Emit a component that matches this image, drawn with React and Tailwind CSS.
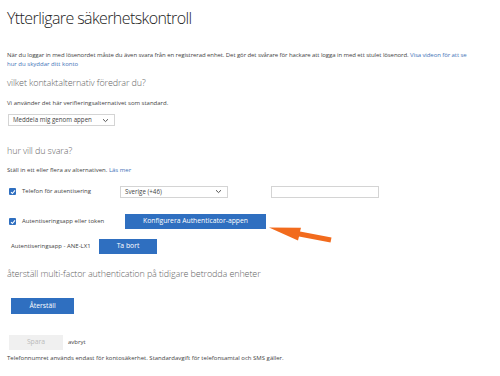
import React from "react";

const Chevron = () => (
  <svg width="7" height="5" viewBox="0 0 7 5" className="shrink-0">
    <path d="M1 1.2 L3.5 3.6 L6 1.2" fill="none" stroke="#555" strokeWidth="1" />
  </svg>
);

const Check = () => (
  <span className="flex h-[7px] w-[7px] items-center justify-center rounded-[1px] bg-[#2f6fc0]">
    <svg width="6" height="6" viewBox="0 0 6 6">
      <path d="M1 3.1 L2.4 4.5 L5 1.4" fill="none" stroke="#fff" strokeWidth="1.1" />
    </svg>
  </span>
);

const FakeSelect = ({ label, className }) => (
  <div
    className={`flex h-[12px] items-center justify-between border border-[#d4d4d4] bg-white pl-[4px] pr-[5px] text-[6.2px] text-[#444] ${className}`}
  >
    <span>{label}</span>
    <Chevron />
  </div>
);

export default function App() {
  return (
    <div
      className="relative h-[376px] w-[500px] overflow-hidden bg-white pl-[7px] text-[#333]"
      style={{ fontFamily: '"Open Sans", "Noto Sans", sans-serif' }}
    >
      {/* Title */}
      <h1 className="pt-[7px] text-[16px] font-light leading-[22px] tracking-[-0.6px] text-[#222]">
        Ytterligare säkerhetskontroll
      </h1>

      <p className="mt-[22px] text-[6px] leading-[9px] text-[#444]">
        <span className="whitespace-nowrap tracking-[-0.08px]">
          När du loggar in med lösenordet måste du även svara från en registrerad enhet. Det gör det svårare för hackare att logga in med ett stulet lösenord.{" "}
          <span className="text-[#3f73b8]">Visa videon för att se</span>
        </span>
        <br />
        <span className="text-[#3f73b8]">hur du skyddar ditt konto</span>
      </p>

      {/* Preferred option */}
      <h2 className="mt-[7px] text-[9px] font-light leading-[14px] tracking-[-0.12px] text-[#666]">
        vilket kontaktalternativ föredrar du?
      </h2>
      <p className="mt-[9px] text-[6px] leading-[9px] text-[#444]">
        Vi använder det här verifieringsalternativet som standard.
      </p>
      <FakeSelect label="Meddela mig genom appen" className="ml-[1px] mt-[6px] w-[107px]" />

      {/* How to answer */}
      <h2 className="mt-[18px] text-[9px] font-light leading-[14px] tracking-[-0.12px] text-[#666]">
        hur vill du svara?
      </h2>
      <p className="mt-[8px] text-[6px] leading-[9px] text-[#444]">
        Ställ in ett eller flera av alternativen. <span className="text-[#3f73b8]">Läs mer</span>
      </p>

      <div className="mt-[10px] flex h-[13px] items-center">
        <div className="ml-[2px] flex w-[111px] items-center gap-[6px] text-[6px] text-[#444]">
          <Check />
          <span>Telefon för autentisering</span>
        </div>
        <FakeSelect label="Sverige (+46)" className="w-[108px]" />
        <div className="ml-[43px] h-[12px] w-[108px] border border-[#d4d4d4] bg-white" />
      </div>

      <div className="mt-[16px] flex h-[15px] items-center">
        <div className="ml-[2px] flex w-[116px] items-center gap-[6px] text-[6px] text-[#444]">
          <Check />
          <span>Autentiseringsapp eller token</span>
        </div>
        <button className="flex h-[15px] w-[141px] items-center justify-center bg-[#2f6fc0] text-[6.8px] text-white">
          Konfigurera Authenticator-appen
        </button>
      </div>

      <div className="mt-[10px] flex h-[15px] items-center">
        <span className="ml-[4px] w-[88px] text-[6px] text-[#444]">Autentiseringsapp - ANE-LX1</span>
        <button className="flex h-[15px] w-[58px] items-center justify-center bg-[#2f6fc0] text-[6.8px] text-white">
          Ta bort
        </button>
      </div>

      {/* Reset */}
      <h2 className="mt-[13px] text-[9px] font-light leading-[14px] tracking-[-0.12px] text-[#666]">
        återställ multi-factor authentication på tidigare betrodda enheter
      </h2>
      <button className="ml-[4px] mt-[17px] flex h-[16px] w-[63px] items-center justify-center bg-[#2f6fc0] text-[6.8px] text-white">
        Återställ
      </button>

      <div className="mt-[21px] flex h-[15px] items-center gap-[5px]">
        <button className="ml-[2px] flex h-[15px] w-[54px] items-center justify-center bg-[#f0f0f0] text-[6.8px] text-[#bbb]">
          Spara
        </button>
        <span className="text-[6px] text-[#444]">avbryt</span>
      </div>
      <p className="mt-[4px] text-[6px] leading-[9px] text-[#444]">
        Telefonnumret används endast för kontosäkerhet. Standardavgift för telefonsamtal och SMS gäller.
      </p>

      {/* Orange arrow overlay */}
      <svg className="absolute left-0 top-0" width="500" height="376" viewBox="0 0 500 376">
        <polygon
          points="269,227.5 301,227.8 300,231.6 331.5,237.5 330.5,242.6 299,236.6 298,240.5"
          fill="#f26b1d"
        />
      </svg>
    </div>
  );
}
